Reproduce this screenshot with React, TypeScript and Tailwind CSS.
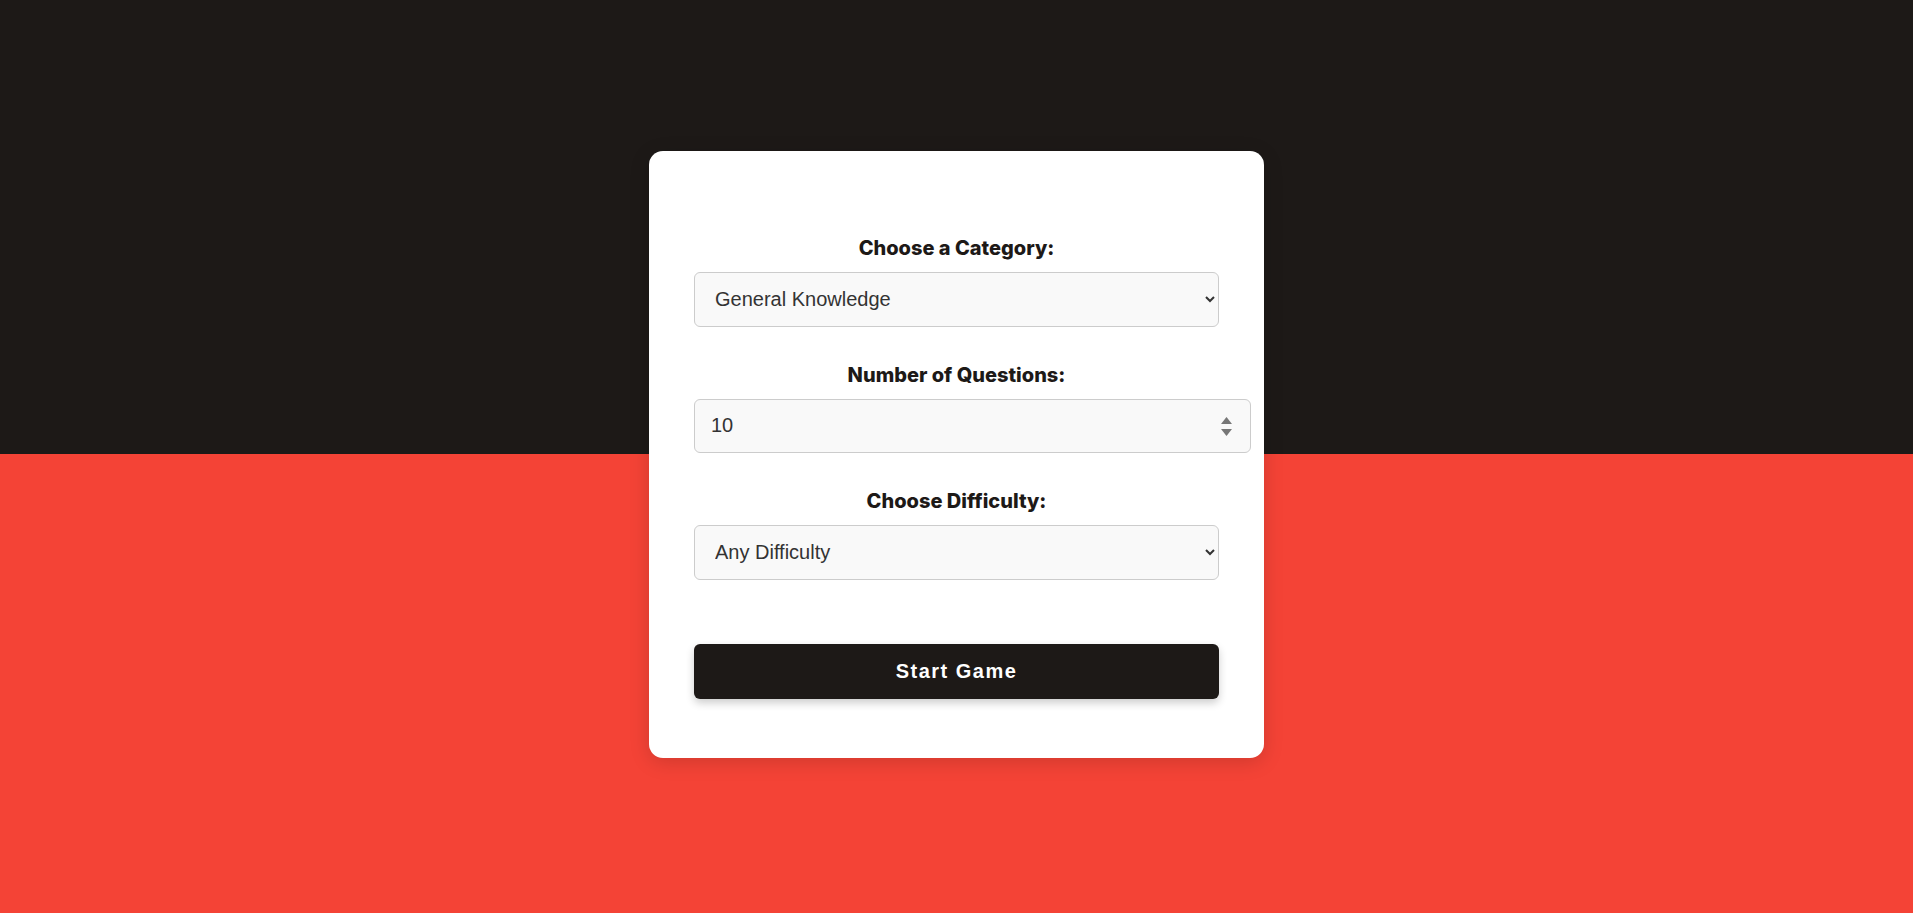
import React from "react";

const Label = ({ children }: { children: React.ReactNode }) => (
  <label className="block h-[27px] mb-[10px] text-center text-[20px] leading-[27px] font-extrabold text-[#1d1917] font-['Inter',sans-serif]">
    {children}
  </label>
);

const selectCls =
  "block w-full h-[55px] pl-[16px] pr-[14px] text-[20px] text-[#333] bg-[#f9f9f9] border border-[#ccc] rounded-[6px] font-['Liberation_Sans',Arial,sans-serif] outline-none";

const App = () => {
  return (
    <div className="min-h-screen flex items-center justify-center bg-[linear-gradient(to_bottom,#1d1917_0,#1d1917_454px,#f44336_454px)]">
      <div className="mb-[5px] w-[615px] bg-white rounded-[14px] shadow-[0_4px_20px_rgba(0,0,0,0.15)] px-[45px] pt-[84px] pb-[59px]">
        <Label>Choose a Category:</Label>
        <select className={selectCls} defaultValue="9">
          <option value="9">General Knowledge</option>
          <option value="10">Entertainment: Books</option>
          <option value="11">Entertainment: Film</option>
        </select>

        <div className="mt-[35px]">
          <Label>Number of Questions:</Label>
          <div className="relative w-[557px]">
            <input
              type="number"
              defaultValue={10}
              className="block w-full h-[54px] px-[16px] text-[20px] text-[#333] bg-[#f9f9f9] border border-[#ccc] rounded-[6px] font-['Liberation_Sans',Arial,sans-serif] outline-none [appearance:textfield] [&::-webkit-inner-spin-button]:appearance-none [&::-webkit-outer-spin-button]:appearance-none"
            />
            <div className="absolute right-[19px] top-[18px] flex flex-col gap-[5px] pointer-events-none">
              <svg width="11" height="7" viewBox="0 0 11 7">
                <path d="M5.5 0 L11 7 L0 7 Z" fill="#777" />
              </svg>
              <svg width="11" height="7" viewBox="0 0 11 7">
                <path d="M0 0 L11 0 L5.5 7 Z" fill="#777" />
              </svg>
            </div>
          </div>
        </div>

        <div className="mt-[35px]">
          <Label>Choose Difficulty:</Label>
          <select className={selectCls} defaultValue="">
            <option value="">Any Difficulty</option>
            <option value="easy">Easy</option>
            <option value="medium">Medium</option>
            <option value="hard">Hard</option>
          </select>
        </div>

        <button className="mt-[64px] block w-full h-[55px] bg-[#1d1917] text-white rounded-[6px] text-[20px] font-bold tracking-[1.5px] shadow-[0_4px_8px_rgba(0,0,0,0.2)] font-['Liberation_Sans',Arial,sans-serif]">
          Start Game
        </button>
      </div>
    </div>
  );
};

export default App;
